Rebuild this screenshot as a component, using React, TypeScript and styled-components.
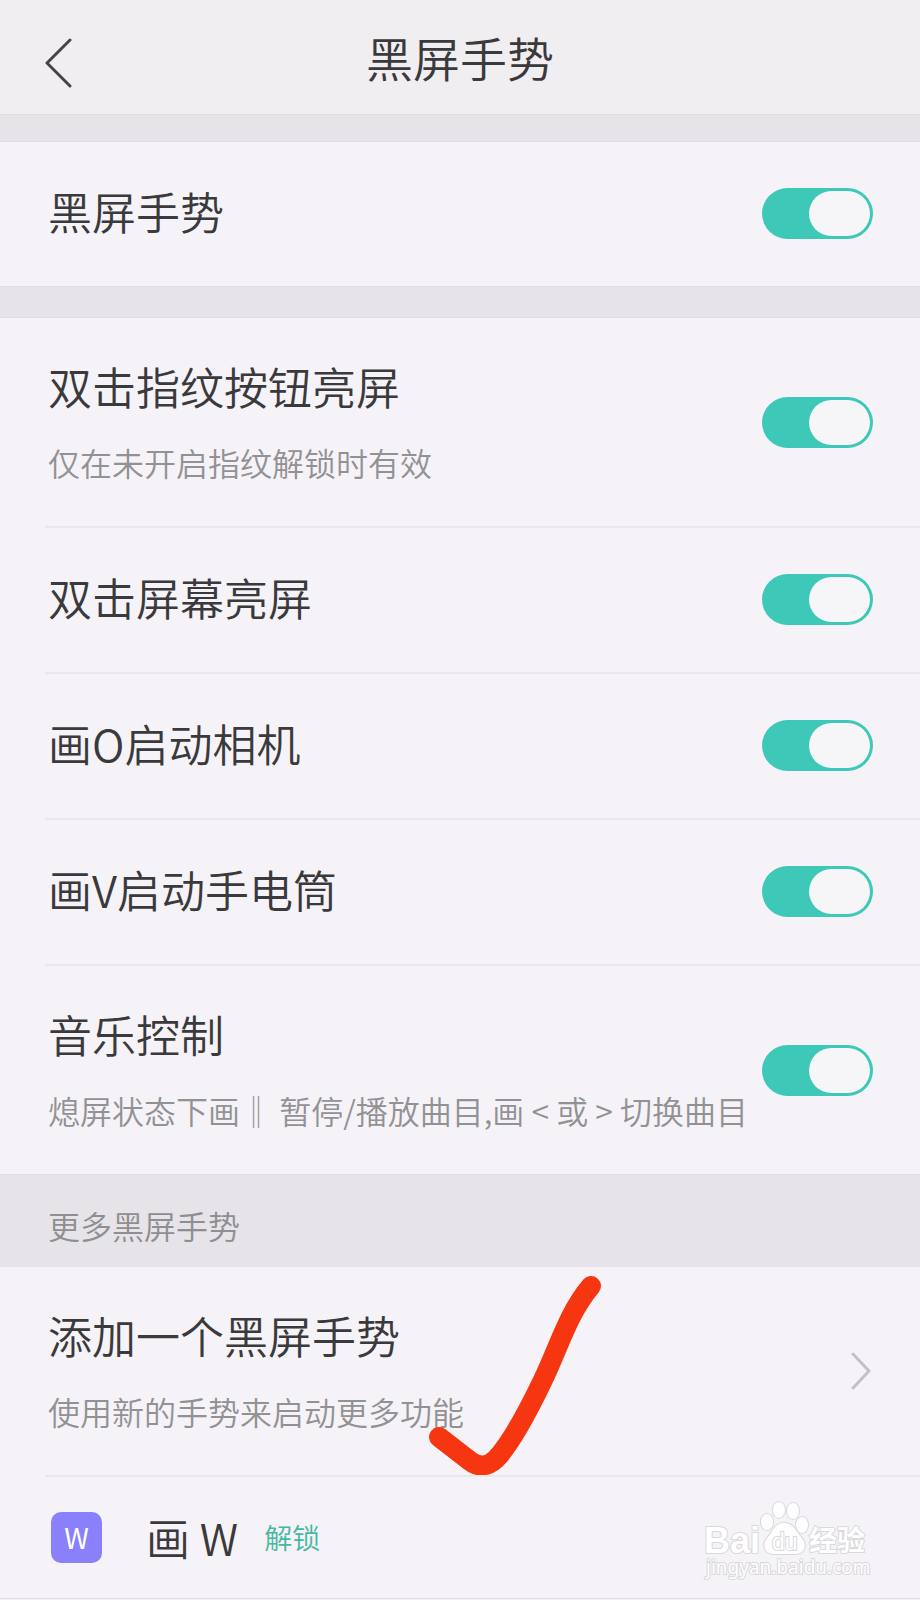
import React, { useId, useState } from "react";
import styled, { createGlobalStyle } from "styled-components";

const GlobalStyle = createGlobalStyle`
  *, *::before, *::after { box-sizing: border-box; }
  body {
    margin: 0;
    background: #f5f3f7;
    color: #3a393c;
    font-family: "Noto Sans CJK SC", "Noto Sans", sans-serif;
    font-weight: 350;
  }
`;

const Page = styled.main`
  position: relative;
  width: 100%;
`;

const Header = styled.header`
  display: grid;
  grid-template-columns: 96px 1fr 96px;
  align-items: center;
  height: 114px;
  background: #f0eef1;
`;

const BackButton = styled.button`
  display: flex;
  align-items: center;
  justify-content: flex-end;
  height: 64px;
  padding: 12px 24px 0 0;
  border: 0;
  background: none;
  color: #454447;
  cursor: pointer;
`;

const Title = styled.h1`
  margin: 0;
  font-size: 47px;
  line-height: 64px;
  font-weight: inherit;
  text-align: center;
`;

const Band = styled.div<{ $size: number }>`
  height: ${(p) => p.$size}px;
  background: #e6e4e8;
  border-top: 1px solid #e0dfe2;
  border-bottom: 1px solid #e0dfe2;
`;

const SectionHeading = styled.h2`
  margin: 0;
  padding: 26px 48px 18px;
  background: #e6e4e8;
  border-top: 1px solid #e0dfe2;
  color: #8f8e91;
  font-size: 32px;
  line-height: 48px;
  font-weight: inherit;
`;

const List = styled.ul`
  margin: 0;
  padding: 0 0 0 45px;
  list-style: none;
`;

const Item = styled.li`
  position: relative;
  & + & { border-top: 2px solid #e9e8eb; }
`;

const Row = styled.div<{ $tall?: boolean }>`
  display: flex;
  align-items: center;
  justify-content: space-between;
  padding: ${(p) => (p.$tall ? "36px 47px 36px 3px" : "37px 47px 39px 3px")};
`;

const LinkRow = styled.a`
  display: flex;
  align-items: center;
  justify-content: space-between;
  padding: 36px 49px 36px 3px;
  color: inherit;
  text-decoration: none;
`;

const Texts = styled.div`
  display: flex;
  flex-direction: column;
  gap: 20px;
  min-width: 0;
  padding-bottom: 4px;
`;

const Name = styled.label`
  font-size: 44px;
  line-height: 64px;
  white-space: nowrap;
`;

const Note = styled.span`
  color: #929194;
  font-size: 32px;
  line-height: 48px;
  white-space: nowrap;
`;

const Switch = styled.input`
  appearance: none;
  flex: none;
  width: 111px;
  height: 51px;
  margin: 0;
  padding: 3px;
  display: flex;
  justify-content: flex-start;
  border-radius: 26px;
  background: #c9c8cc;
  cursor: pointer;

  &::before {
    content: "";
    width: 61px;
    height: 45px;
    border-radius: 23px;
    background: #f6f6f9;
  }
  &:checked {
    justify-content: flex-end;
    background: #3ec8b8;
  }
`;

const GestureRow = styled.a`
  display: flex;
  align-items: center;
  padding: 28px 47px 29px 6px;
  color: inherit;
  text-decoration: none;
`;

const EndLine = styled.hr`
  height: 1px;
  margin: 0;
  border: 0;
  background: #dddce0;
`;

const Badge = styled.span`
  display: flex;
  align-items: center;
  justify-content: center;
  width: 51px;
  height: 51px;
  margin-right: 44px;
  border-radius: 10px;
  background: #8a80fc;
  color: #fff;
  font-size: 28px;
  line-height: 32px;
  font-weight: 400;
`;

const GestureName = styled.span`
  font-size: 44px;
  line-height: 64px;
`;

const Action = styled.span`
  margin-left: 26px;
  color: #45b8a2;
  font-size: 28px;
  line-height: 40px;
`;

const Tick = styled.svg`
  position: absolute;
  top: 0;
  left: 375px;
  width: 190px;
  height: 212px;
  pointer-events: none;
`;

const Watermark = styled.svg`
  position: absolute;
  right: 44px;
  bottom: 15px;
  width: 176px;
  height: 84px;
  pointer-events: none;
`;

function SwitchRow({ name, note }: { name: string; note?: string }) {
  const id = useId();
  const [on, setOn] = useState(true);
  return (
    <Row $tall={Boolean(note)}>
      <Texts>
        <Name htmlFor={id}>{name}</Name>
        {note && <Note>{note}</Note>}
      </Texts>
      <Switch id={id} type="checkbox" role="switch" checked={on} onChange={(e) => setOn(e.target.checked)} />
    </Row>
  );
}

const gestures = [
  { name: "双击指纹按钮亮屏", note: "仅在未开启指纹解锁时有效" },
  { name: "双击屏幕亮屏" },
  { name: "画O启动相机" },
  { name: "画V启动手电筒" },
  { name: "音乐控制", note: "熄屏状态下画‖ 暂停/播放曲目,画 < 或 > 切换曲目" },
];

export default function App() {
  return (
    <Page>
      <GlobalStyle />
      <Header>
        <BackButton type="button" aria-label="返回">
          <svg width="28" height="50" viewBox="0 0 28 50" fill="none" stroke="currentColor" strokeWidth="3" strokeLinecap="round" strokeLinejoin="round">
            <path d="M26 2 3 25l23 23" />
          </svg>
        </BackButton>
        <Title>黑屏手势</Title>
      </Header>
      <Band $size={28} />
      <List>
        <Item>
          <SwitchRow name="黑屏手势" />
        </Item>
      </List>
      <Band $size={32} />
      <List>
        {gestures.map((g) => (
          <Item key={g.name}>
            <SwitchRow {...g} />
          </Item>
        ))}
      </List>
      <SectionHeading>更多黑屏手势</SectionHeading>
      <List>
        <Item>
          <LinkRow href="#add">
            <Texts>
              <Name as="span">添加一个黑屏手势</Name>
              <Note>使用新的手势来启动更多功能</Note>
            </Texts>
            <svg width="20" height="38" viewBox="0 0 20 38" fill="none" stroke="#c2c1c5" strokeWidth="3" strokeLinecap="round" strokeLinejoin="round">
              <path d="M2 2l16 17L2 36" />
            </svg>
          </LinkRow>
          <Tick viewBox="0 0 190 212" fill="none" stroke="#f63611" strokeWidth="20" strokeLinecap="round" strokeLinejoin="round" aria-hidden="true">
            <path d="M19 170L50 194Q63 204 76 192C92 175 109 142 122 115C139 80 148 46 171 19" />
          </Tick>
        </Item>
        <Item>
          <GestureRow href="#w">
            <Badge>W</Badge>
            <GestureName>画 W</GestureName>
            <Action>解锁</Action>
          </GestureRow>
        </Item>
      </List>
      <EndLine />
      <Watermark viewBox="0 0 176 84" fill="#fefefe" stroke="#d9d8dc" strokeWidth="2" paintOrder="stroke" aria-hidden="true">
        <text x="4" y="53" fontFamily="Liberation Sans" fontSize="36" fontWeight="700">Bai</text>
        <ellipse cx="67" cy="22" rx="6" ry="8" />
        <ellipse cx="79" cy="10" rx="6" ry="8" />
        <ellipse cx="93" cy="11" rx="6" ry="8" />
        <ellipse cx="102" cy="25" rx="6" ry="8" />
        <path d="M84 23c-9 0-11 8-16 14-6 6-5 17 6 17h21c11 0 12-11 6-17-5-6-8-14-17-14z" />
        <text x="72" y="50" fontFamily="Liberation Sans" fontSize="23">du</text>
        <text x="109" y="51" fontFamily="Noto Sans CJK SC" fontSize="28" fontWeight="700">经验</text>
        <text x="6" y="74" fontFamily="Noto Sans" fontSize="19" fontWeight="400">jingyan.baidu.com</text>
      </Watermark>
    </Page>
  );
}
